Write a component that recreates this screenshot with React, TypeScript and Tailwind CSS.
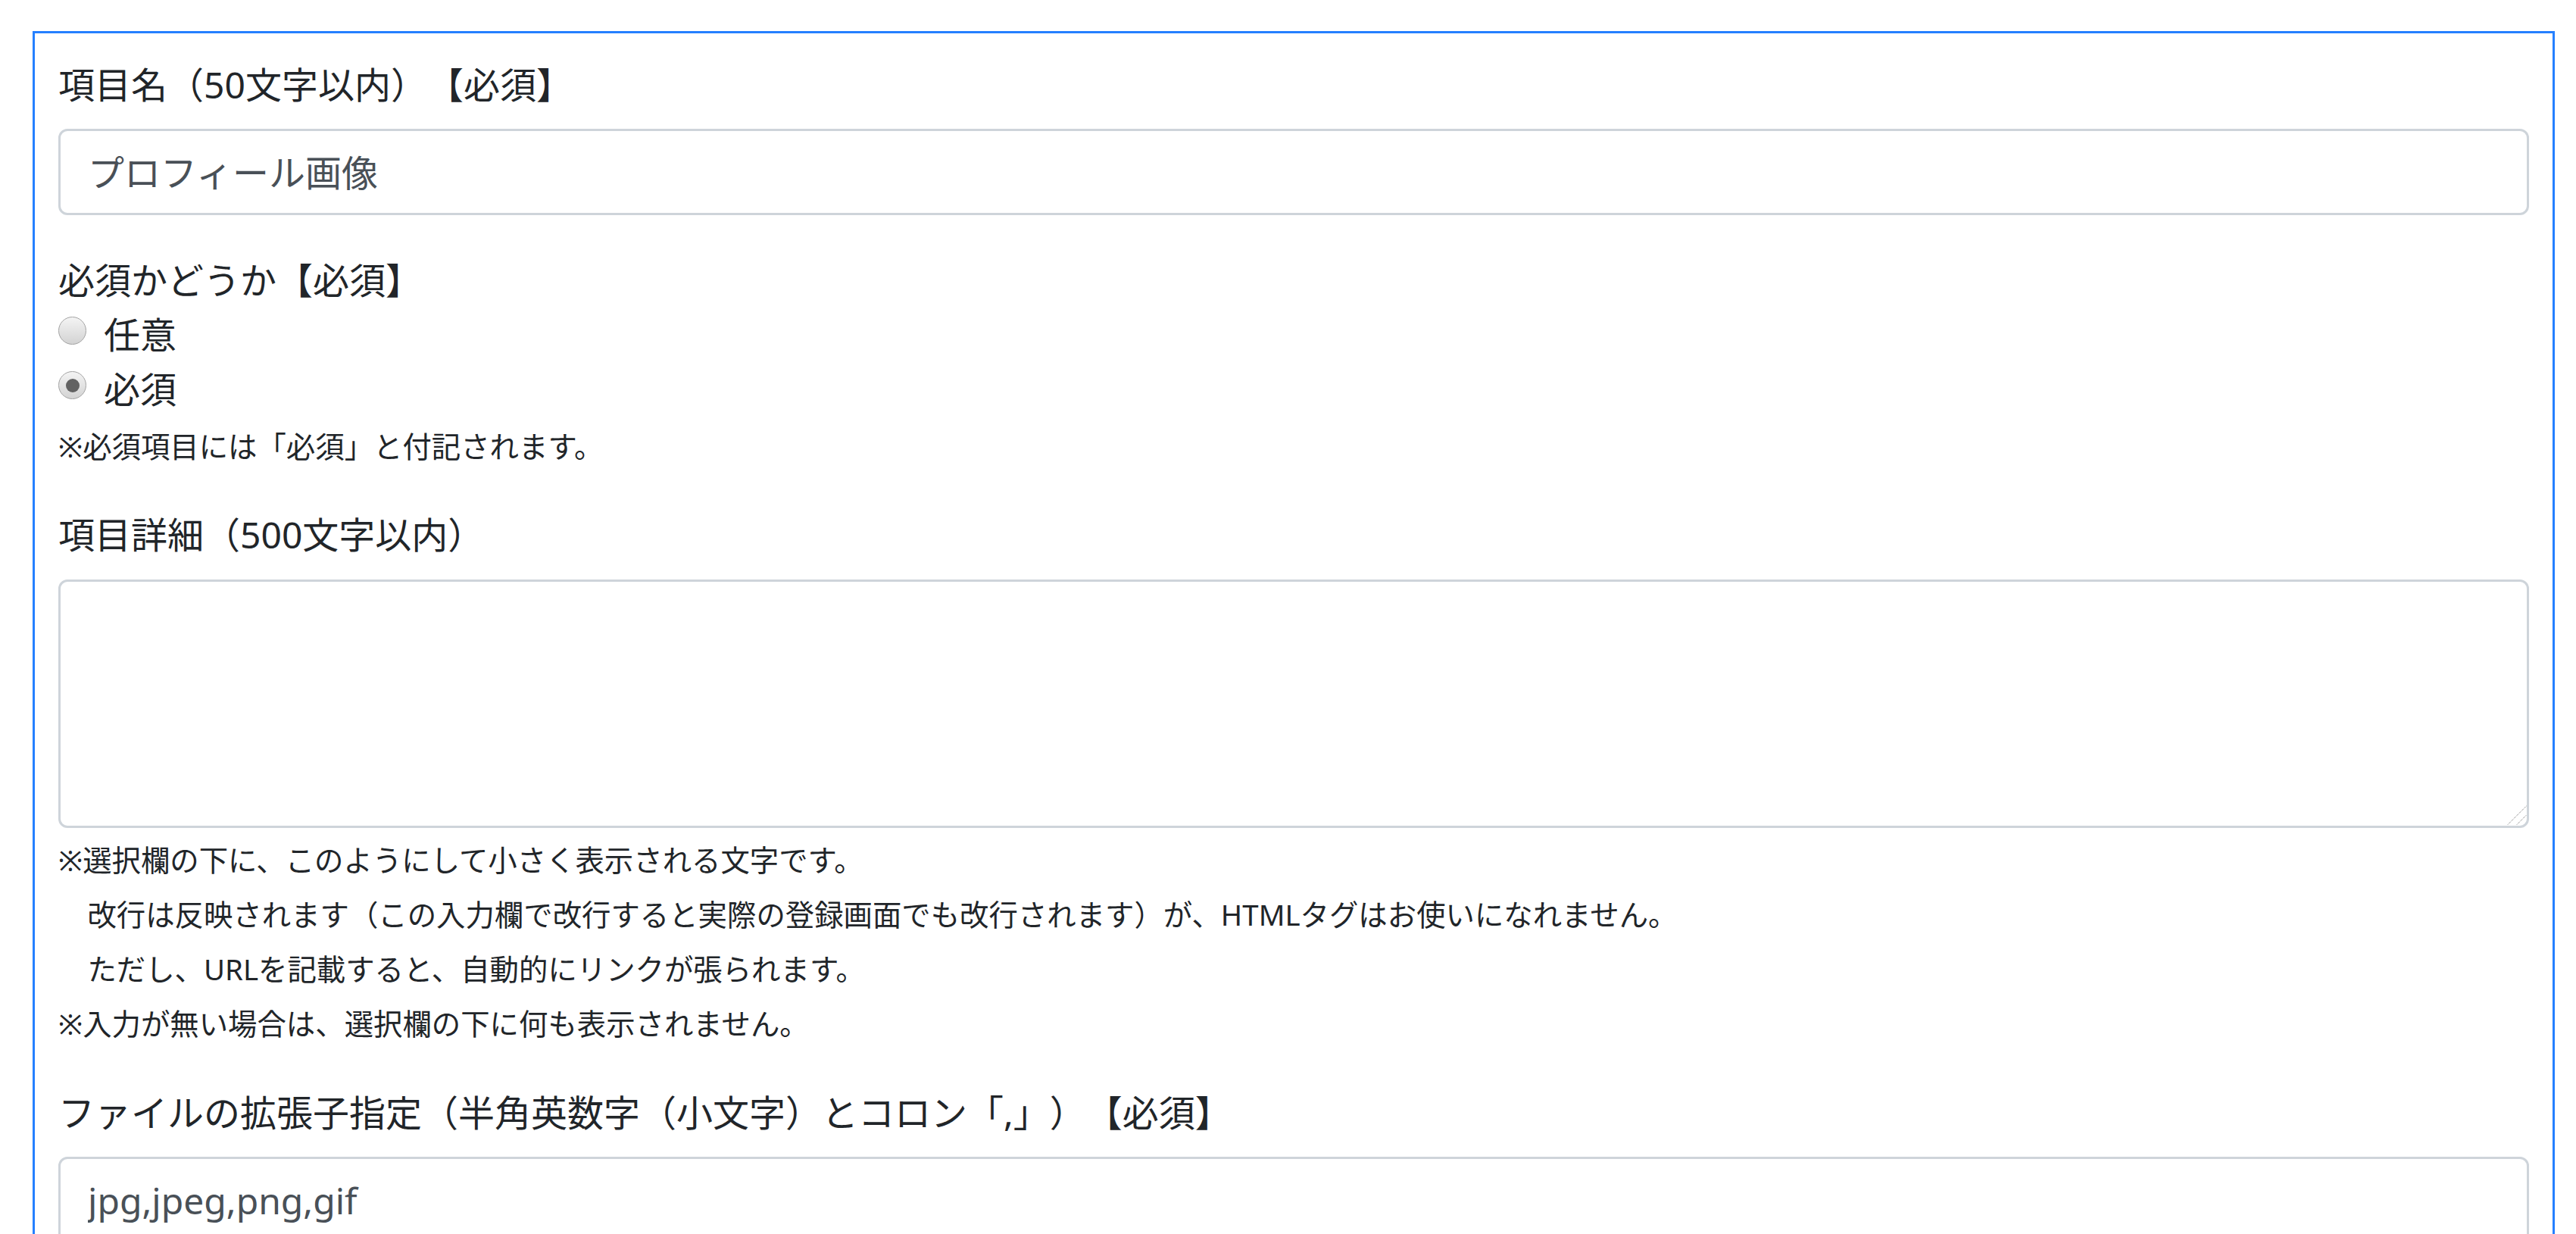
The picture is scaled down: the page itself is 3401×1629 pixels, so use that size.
import type { ReactNode } from 'react';

const labelCls = 'block text-[48px] leading-[72px] text-[#212529]';
const inputCls =
  'block h-[114px] w-full rounded-[12px] border-[3px] border-[#ced4da] bg-white px-[36px] text-[48px] leading-[72px] text-[#495057] outline-none';

function Radio({ label, checked }: { label: string; checked?: boolean }) {
  return (
    <label className="flex h-[72px] items-start">
      <span className="mt-[12px] flex h-[37px] w-[37px] shrink-0 items-center justify-center rounded-full border-[1.5px] border-[#a3a3a3] bg-linear-to-b from-[#f4f4f4] to-[#d3d3d3]">
        {checked && <span className="h-[18px] w-[18px] rounded-full bg-[#626262]" />}
      </span>
      <span className="ml-[23px] text-[48px] leading-[72px] text-[#212529]">{label}</span>
    </label>
  );
}

function Note({ children }: { children: ReactNode }) {
  return <p className="text-[38.4px] leading-[72px] text-[#212529]">{children}</p>;
}

export default function App() {
  return (
    <div className="h-screen overflow-hidden bg-white font-['Noto_Sans','Noto_Sans_CJK_JP',sans-serif] [text-spacing-trim:space-all]">
      <div className="ml-[43px] mr-[28px] mt-[41px] border-[3px] border-[#2580ff] px-[31px] pb-[200px] pt-[32px]">
        {/* 項目名 */}
        <div>
          <label className={`${labelCls} mb-[22px]`}>項目名（50文字以内）【必須】</label>
          <input type="text" defaultValue="プロフィール画像" className={`${inputCls} pb-[5px]`} />
        </div>

        {/* 必須かどうか */}
        <div className="mt-[50px]">
          <div className={labelCls}>必須かどうか【必須】</div>
          <Radio label="任意" />
          <Radio label="必須" checked />
          <div className="mt-[3px]">
            <Note>※必須項目には「必須」と付記されます。</Note>
          </div>
        </div>

        {/* 項目詳細 */}
        <div className="mt-[45px]">
          <label className={`${labelCls} mb-[23px]`}>項目詳細（500文字以内）</label>
          <div className="relative">
            <textarea className="block h-[328px] w-full resize-none rounded-[12px] border-[3px] border-[#ced4da] bg-white px-[36px] py-[18px] text-[48px] leading-[72px] text-[#495057] outline-none" />
            <svg
              className="pointer-events-none absolute bottom-[4px] right-[3px]"
              width="26"
              height="26"
              viewBox="0 0 26 26"
            >
              <line x1="1" y1="25.5" x2="25.5" y2="1" stroke="#6b6b6b" strokeWidth="1" strokeDasharray="1 1" />
              <line x1="13" y1="25.5" x2="25.5" y2="13" stroke="#6b6b6b" strokeWidth="1" strokeDasharray="1 1" />
            </svg>
          </div>
          <div className="mt-[6px]">
            <Note>※選択欄の下に、このようにして小さく表示される文字です。</Note>
            <Note>　改行は反映されます（この入力欄で改行すると実際の登録画面でも改行されます）が、HTMLタグはお使いになれません。</Note>
            <Note>　ただし、URLを記載すると、自動的にリンクが張られます。</Note>
            <Note>※入力が無い場合は、選択欄の下に何も表示されません。</Note>
          </div>
        </div>

        {/* ファイルの拡張子指定 */}
        <div className="mt-[46px]">
          <label className={`${labelCls} mb-[22px]`}>ファイルの拡張子指定（半角英数字（小文字）とコロン「,」）【必須】</label>
          <input type="text" defaultValue="jpg,jpeg,png,gif" className={inputCls} />
        </div>
      </div>
    </div>
  );
}
